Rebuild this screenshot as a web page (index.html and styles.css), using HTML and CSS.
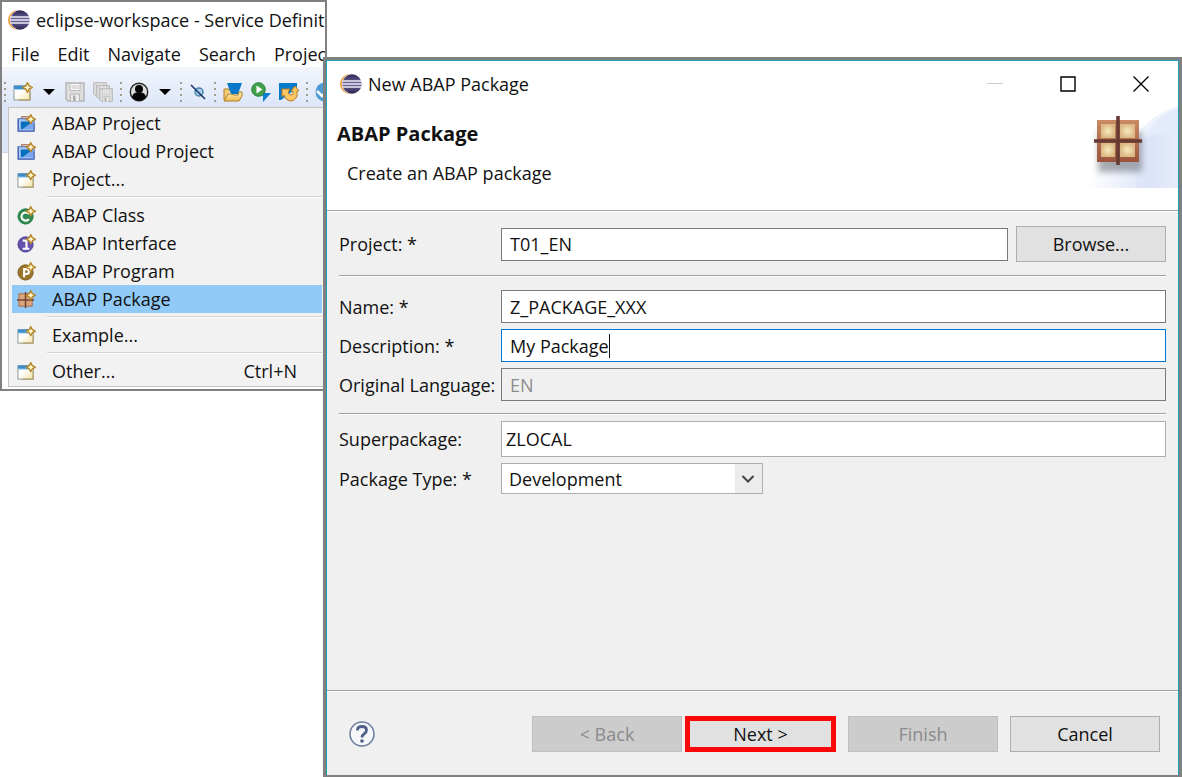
FILE: index.html
```
<!DOCTYPE html>
<html lang="en">
<head>
<meta charset="utf-8">
<title>New ABAP Package</title>
<link rel="stylesheet" href="styles.css">
</head>
<body>
<svg class="defs" aria-hidden="true">
  <defs>
    <linearGradient id="gEclipse" x1="0" y1="0" x2="0" y2="1"><stop offset="0" stop-color="#2f2858"/><stop offset=".5" stop-color="#6f6a9c"/><stop offset="1" stop-color="#2b2352"/></linearGradient>
    <linearGradient id="gPaper" x1="0" y1="0" x2="1" y2="1"><stop offset=".4" stop-color="#fff"/><stop offset="1" stop-color="#f3e3a4"/></linearGradient>
    <linearGradient id="gFolder" x1="0" y1="0" x2="0" y2="1"><stop offset="0" stop-color="#fff0be"/><stop offset="1" stop-color="#f0b94e"/></linearGradient>
    <linearGradient id="gFrame" x1="0" y1="0" x2="0" y2="1"><stop offset="0" stop-color="#c98a64"/><stop offset="1" stop-color="#9a543c"/></linearGradient>
    <radialGradient id="gCell"><stop offset="0" stop-color="#f8ecc0"/><stop offset="1" stop-color="#dcb884"/></radialGradient>
    <linearGradient id="gWave" x1="0" y1="0" x2="1" y2="0"><stop offset="0" stop-color="#dfe6f8" stop-opacity="0"/><stop offset=".7" stop-color="#dce4f8"/><stop offset="1" stop-color="#e6ecfa"/></linearGradient>
    <filter id="soft" x="-20%" y="-20%" width="140%" height="140%"><feGaussianBlur stdDeviation="3"/></filter>
    <symbol id="eclipse" viewBox="0 0 22 22">
      <circle cx="10" cy="11" r="10" fill="#f09a3c"/><circle cx="11.6" cy="11" r="9.9" fill="#fff"/>
      <circle cx="12" cy="11" r="9.7" fill="url(#gEclipse)"/>
      <path d="M2.8 8h18.4M2.4 11h19.2M2.8 14h18.4" stroke="#eceaf6" stroke-width="1.5"/>
    </symbol>
    <symbol id="spark" viewBox="0 0 10 10"><path d="M5 .6 6.5 3.5 9.4 5 6.5 6.5 5 9.4 3.5 6.5.6 5 3.5 3.5Z" fill="#fff6cf" stroke="#b8892a" stroke-width="1.3"/></symbol>
    <symbol id="wizard" viewBox="0 0 20 20">
      <rect x="1" y="4" width="16" height="14" fill="url(#gPaper)" stroke="#8c9694"/>
      <rect x="1" y="3.500" width="15" height="4" fill="#3d8ecb"/><path d="M1 7.500h15" stroke="#a6d2ef"/>
      <path d="M17 9v9H6" fill="none" stroke="#b39a58"/>
      <use href="#spark" x="9" y="0" width="11" height="11"/>
    </symbol>
    <symbol id="project" viewBox="0 0 20 20">
      <path d="M5 5V3h8v2" fill="none" stroke="#b8866c" stroke-width="1.6"/>
      <rect x="1" y="5" width="17" height="13" fill="#a9c8f6" stroke="#4668ac"/>
      <path d="M4 8h13L6 16H4Z" fill="#086fbd"/><path d="M17 8v8H6Z" fill="#78a5f0"/>
      <path d="M1.500 6v12M18 10v8H1" fill="none" stroke="#4562b6"/>
      <use href="#spark" x="9" y="0" width="11" height="11"/>
    </symbol>
    <symbol id="class" viewBox="0 0 20 20">
      <circle cx="9" cy="11" r="8" fill="#318b4e" stroke="#1d7542"/><path d="M12.500 8.500A4.300 4.300 0 1 0 12.500 13.700" fill="none" stroke="#fff" stroke-width="2.200"/>
      <use href="#spark" x="9" y="0" width="11" height="11"/>
    </symbol>
    <symbol id="interface" viewBox="0 0 20 20">
      <circle cx="9" cy="11" r="8" fill="#6652ac" stroke="#4f3b96"/><path d="M6 7h4v8M6 15.500h7" fill="none" stroke="#fff" stroke-width="2.200"/>
      <use href="#spark" x="9" y="0" width="11" height="11"/>
    </symbol>
    <symbol id="program" viewBox="0 0 20 20">
      <circle cx="9" cy="11" r="8" fill="#9a762a" stroke="#7c5a16"/><path d="M7.500 16V7.500H10a2.600 2.600 0 0 1 0 5.200H7.500" fill="none" stroke="#fff" stroke-width="2.200"/>
      <use href="#spark" x="9" y="0" width="11" height="11"/>
    </symbol>
    <symbol id="package" viewBox="0 0 20 20">
      <rect x="2" y="4" width="14" height="13" fill="#dba67e" stroke="#a86a4c"/>
      <path d="M9 2v17M0 10.500h18" stroke="#74412f" stroke-width="1.600"/>
      <use href="#spark" x="9" y="0" width="11" height="11"/>
    </symbol>
    <symbol id="floppy" viewBox="0 0 20 20">
      <path d="M1 1h18v18H3l-2-2Z" fill="#dedede" stroke="#b4b4b4" stroke-width="1.400"/>
      <path d="M5 1.500h10v7H5Z" fill="#f6f6f6" stroke="#bdbdbd"/><path d="M6.500 4h7M6.500 6h7" stroke="#c6c6c6"/><path d="M5.500 19v-7h9v7" fill="#eee" stroke="#b4b4b4"/><path d="M8 13.500h2.500V19H8Z" fill="#aaa"/>
    </symbol>
  </defs>
</svg>

<main class="desktop">
  <section class="workbench" aria-label="Eclipse workbench">
    <header class="caption">
      <svg class="app-icon"><use href="#eclipse"/></svg>
      <span>eclipse-workspace - Service Definit</span>
    </header>
    <nav class="menubar" aria-label="Main menu">
      <button type="button">File</button><button type="button">Edit</button><button type="button">Navigate</button><button type="button">Search</button><button type="button">Project</button>
    </nav>
    <div class="toolbar" role="toolbar" aria-label="Main toolbar">
      <i class="grip"></i>
      <button type="button" class="tool" aria-label="New"><svg><use href="#wizard"/></svg></button>
      <button type="button" class="arrow" aria-label="New options"></button>
      <button type="button" class="tool" aria-label="Save"><svg><use href="#floppy"/></svg></button>
      <button type="button" class="tool" aria-label="Save all"><svg viewBox="0 0 20 20"><use href="#floppy" x="0" y="0" width="14" height="14"/><use href="#floppy" x="3" y="3" width="14" height="14"/><use href="#floppy" x="6" y="6" width="14" height="14"/></svg></button>
      <i class="grip"></i>
      <button type="button" class="tool" aria-label="User"><svg viewBox="0 0 20 20"><circle cx="10" cy="10" r="8.700" fill="#ddd" stroke="#222" stroke-width="1.400"/><circle cx="10" cy="7" r="4" fill="#050505"/><path d="M3 15q1-4.500 5-4.500h4q4 0 5 4.500-3 3.800-7 3.800T3 15Z" fill="#050505"/></svg></button>
      <button type="button" class="arrow" aria-label="User options"></button>
      <i class="grip"></i>
      <button type="button" class="tool narrow" aria-label="Skip breakpoints"><svg viewBox="1 0 18 20"><circle cx="11" cy="10" r="4" fill="#a9cfe4" stroke="#4584ad" stroke-width="1.500"/><path d="M3 3l14 14" stroke="#1d3567" stroke-width="1.600"/></svg></button>
      <i class="grip"></i>
      <button type="button" class="tool" aria-label="Open object"><svg viewBox="0 0 20 20"><path d="M1 18V7h5l1 2" fill="#f3cc72" stroke="#b17a25"/><path d="M4 1h15l-4 11H8Z" fill="#0879c8"/><path d="M1 19 5 12h4l1 1h5l1-3h3v4l-3 5Z" fill="url(#gFolder)" stroke="#b17a25"/></svg></button>
      <button type="button" class="tool" aria-label="Run object"><svg viewBox="0 0 20 20"><path d="M9 11h11L12 20v-6Z" fill="#087fd0"/><circle cx="7.500" cy="7.500" r="6.800" fill="#43a04b" stroke="#248139"/><path d="M5.500 3.500 11.500 7.500 5.500 11.500Z" fill="#fff"/></svg></button>
      <button type="button" class="tool" aria-label="Refresh object"><svg viewBox="0 0 20 20"><path d="M0 1h18v5L2 18H0Z" fill="#087acb"/><path d="M3 7h8L9 10q1 4 4 3 1-1 1-4h-2l4-5 4 5h-2v5q-2 5-7 5-5-1-6-6l-2 2Z" fill="#fbc765" stroke="#b97a21"/></svg></button>
      <i class="grip"></i>
      <button type="button" class="tool" aria-label="Check"><svg viewBox="0 0 20 20"><circle cx="10" cy="10" r="9.500" fill="#4a9bd3"/><path d="m2 9 5 5 8-8" fill="none" stroke="#fff" stroke-width="2.500"/></svg></button>
    </div>
    <div class="editor">
      <menu class="new-menu">
        <li><button type="button"><svg><use href="#project"/></svg><span>ABAP Project</span></button></li>
        <li><button type="button"><svg><use href="#project"/></svg><span>ABAP Cloud Project</span></button></li>
        <li><button type="button"><svg><use href="#wizard"/></svg><span>Project...</span></button></li>
        <li class="divider"></li>
        <li><button type="button"><svg><use href="#class"/></svg><span>ABAP Class</span></button></li>
        <li><button type="button"><svg><use href="#interface"/></svg><span>ABAP Interface</span></button></li>
        <li><button type="button"><svg><use href="#program"/></svg><span>ABAP Program</span></button></li>
        <li><button type="button" class="selected"><svg><use href="#package"/></svg><span>ABAP Package</span></button></li>
        <li class="divider"></li>
        <li><button type="button"><svg><use href="#wizard"/></svg><span>Example...</span></button></li>
        <li class="divider"></li>
        <li><button type="button"><svg><use href="#wizard"/></svg><span>Other...</span><kbd>Ctrl+N</kbd></button></li>
      </menu>
    </div>
  </section>

  <section class="dialog" role="dialog" aria-labelledby="dialog-title">
    <header class="banner">
      <div class="titlebar">
        <svg class="app-icon"><use href="#eclipse"/></svg>
        <span id="dialog-title">New ABAP Package</span>
        <div class="window-buttons">
          <button type="button" disabled aria-label="Minimize"><svg viewBox="0 0 16 16"><path d="M0 7.500h16" stroke="#ccc"/></svg></button>
          <button type="button" aria-label="Maximize"><svg viewBox="0 0 16 16"><path d="M1 1h14v14H1Z" fill="none" stroke="#000" stroke-width="1.400"/></svg></button>
          <button type="button" aria-label="Close"><svg viewBox="0 0 16 16"><path d="m.5.5 15 15m0-15-15 15" stroke="#000" stroke-width="1.300"/></svg></button>
        </div>
      </div>
      <div class="intro">
        <div class="intro-text">
          <h1>ABAP Package</h1>
          <p>Create an ABAP package</p>
        </div>
        <svg class="banner-art" viewBox="0 0 92 84" aria-hidden="true">
          <path d="M50 30Q66 8 92 0v82H50Z" fill="#eef3fd"/>
          <path d="M52 44Q64 12 92 2v80H50Z" fill="#e4ebfa"/>
          <path d="M0 82Q10 60 50 36Q70 26 92 26v56Z" fill="url(#gWave)"/>
          <rect x="12" y="26" width="44" height="40" fill="#70747c" opacity=".6" filter="url(#soft)"/>
          <rect x="11" y="14" width="42" height="42" fill="url(#gFrame)"/>
          <g fill="url(#gCell)"><rect x="15" y="18" width="14" height="14"/><rect x="34" y="18" width="15" height="14"/><rect x="15" y="37" width="14" height="14"/><rect x="34" y="37" width="15" height="14"/></g>
          <path d="M32 10v49M8 35h48" stroke="#683b32" stroke-width="3.600"/>
        </svg>
      </div>
    </header>

    <form class="form">
      <div class="row">
        <label for="project-name">Project: *</label>
        <input id="project-name" type="text" value="T01_EN">
        <button type="button" class="btn">Browse...</button>
      </div>
      <hr>
      <div class="group">
        <div class="row"><label for="name">Name: *</label><input id="name" type="text" value="Z_PACKAGE_XXX"></div>
        <div class="row"><label for="description">Description: *</label>
          <div class="field"><input id="description" type="text" value="My Package"><i class="caret"></i></div></div>
        <div class="row"><label for="language">Original Language:</label><input id="language" type="text" value="EN" disabled></div>
      </div>
      <hr class="tight">
      <div class="group">
        <div class="row"><label for="super">Superpackage:</label><input id="super" class="tall" type="text" value="ZLOCAL"></div>
        <div class="row"><label for="type">Package Type: *</label>
          <div class="combo"><select id="type"><option>Development</option></select><svg viewBox="0 0 14 10" aria-hidden="true"><path d="m1.500 2 5.500 5.500L12.500 2" fill="none" stroke="#444" stroke-width="2"/></svg></div></div>
      </div>
    </form>

    <footer class="actions">
      <button type="button" class="help" aria-label="Help"><svg viewBox="0 0 26 26"><circle cx="13" cy="13" r="12" fill="#f6f7fa" stroke="#697c9f" stroke-width="1.500"/><path d="M8.500 9.500q0-4 4.500-4t4.500 3.700q0 2.200-2.500 3.800-2 1.300-2 3.500" fill="none" stroke="#4c6088" stroke-width="2.800"/><circle cx="13" cy="20" r="1.800" fill="#4c6088"/></svg></button>
      <div class="nav-pair">
        <button type="button" class="btn" disabled>&lt; Back</button>
        <button type="button" class="btn next">Next &gt;</button>
      </div>
      <button type="button" class="btn" disabled>Finish</button>
      <button type="button" class="btn">Cancel</button>
    </footer>
  </section>
</main>
</body>
</html>
```
FILE: styles.css
```
* { box-sizing: border-box; }

body {
  margin: 0;
  background: #fff;
  color: #111;
  font: 18px/24px "Open Sans", "Noto Sans", sans-serif;
}

button, input, select, kbd { font: inherit; color: inherit; }
button { margin: 0; padding: 0; border: 0; background: none; white-space: nowrap; }
svg { display: block; flex: none; }
.defs { position: absolute; width: 0; height: 0; }
.app-icon { width: 22px; height: 22px; }

.desktop { position: relative; min-height: 100vh; }

/* Workbench window */
.workbench {
  position: absolute;
  top: 0;
  left: 0;
  width: 327px;
  overflow: hidden;
  border: 2px solid #808080;
}
.caption { display: flex; align-items: center; gap: 6px; height: 36px; padding-left: 6px; white-space: nowrap; }
.menubar { display: flex; gap: 18px; height: 29px; padding: 2px 0 0 9px; align-items: center; }
.toolbar {
  display: flex;
  align-items: center;
  height: 40px;
  padding-top: 10px;
  background: linear-gradient(#f3f5fb, #dce6f8);
}
.tool { flex: none; width: 20px; margin: 0 4px; }
.tool svg { width: 100%; height: 20px; }
.tool.narrow { width: 18px; }
.arrow {
  flex: none;
  width: 12px;
  height: 6px;
  margin: 0 6px;
  background: #000;
  clip-path: polygon(0 0, 100% 0, 50% 100%);
}
.grip { flex: none; width: 2px; height: 20px; margin: 0 3px; background: repeating-linear-gradient(#a39c92 0 2px, transparent 2px 6px); }
.toolbar .grip:first-child { margin-left: 2px; }
.editor { padding: 0 0 2px 6px; background: linear-gradient(#dce6f5 45px, #9db1d0 45px, #fff 46px); }

.new-menu {
  list-style: none;
  margin: 0;
  padding: 1px 3px;
  border: 1px solid #c4c4c4;
  border-right: 0;
  background: #f2f2f2;
}
.new-menu button { display: flex; align-items: center; width: 100%; height: 28px; padding-left: 5px; gap: 16px; text-align: left; }
.new-menu svg { width: 19px; height: 19px; }
.new-menu .selected { background: #91c9f7; }
.new-menu kbd { margin: 0 25px 0 auto; }
.divider { height: 8px; margin-left: 35px; background: linear-gradient(transparent 3px, #d2d2d2 3px 4px, #fff 4px 5px, transparent 5px); }

/* Wizard dialog */
.dialog {
  position: absolute;
  inset: 57px 0 0 323px;
  display: flex;
  flex-direction: column;
  border: 3px solid #808080;
  border-bottom-width: 2px;
  background: #f0f0f0;
  box-shadow: inset 0 0 0 1px #1a9fb8;
}
.banner { margin: 1px 1px 0; border-bottom: 1px solid #a0a0a0; background: #fff; box-shadow: 0 1px #fff; }
.titlebar { display: flex; align-items: center; gap: 6px; height: 45px; padding: 0 29px 0 13px; }
.window-buttons { display: flex; gap: 57px; margin-left: auto; }
.window-buttons svg { width: 16px; height: 16px; }
.intro { display: flex; justify-content: space-between; }
.intro-text { padding: 16px 0 25px 10px; }
.intro h1 { margin: 0; font-size: 20px; line-height: 24px; }
.intro p { margin: 15px 0 0 10px; }
.banner-art { width: 92px; height: 84px; }

.form { flex: 1; padding: 15px 13px 0; }
.row { display: grid; grid-template-columns: 162px 1fr auto; align-items: center; }
.row .btn { margin-left: 8px; }
.row label { white-space: nowrap; }
.group { display: grid; gap: 6px; }
.form hr { height: 2px; margin: 13px 0; border: 0; background: linear-gradient(#a0a0a0 1px, #fff 1px); }
.form hr.tight { margin: 12px 0 6px; }
.form input {
  width: 100%;
  min-width: 0;
  height: 33px;
  padding: 0 8px;
  border: 1px solid #7a7a7a;
  border-radius: 0;
  background: #fff;
}
.form input:disabled { background: #f0f0f0; color: #8c8c8c; }
.form input.tall { height: 36px; padding: 0 4px; border-color: #abadb3; }
.field { display: flex; align-items: center; height: 33px; border: 1px solid #0078d7; background: #fff; padding: 0 8px; }
.form .field input { width: auto; height: 31px; padding: 0; border: 0; outline: 0; field-sizing: content; }
.caret { width: 1px; height: 24px; background: #111; }
.combo { display: grid; width: 262px; height: 31px; align-items: center; }
.combo select { grid-area: 1 / 1; width: 100%; height: 100%; padding: 0 7px; border: 1px solid #abadb3; border-radius: 0; background: linear-gradient(90deg, #fff calc(100% - 27px), #ececec calc(100% - 27px)); appearance: none; }
.combo svg { grid-area: 1 / 1; justify-self: end; width: 14px; height: 10px; margin-right: 8px; pointer-events: none; }

.btn { width: 150px; height: 36px; border: 1px solid #adadad; background: #e1e1e1; }
.btn:disabled { border-color: #bfbfbf; background: #ccc; color: #8a8a8a; }
.btn.next { width: 151px; border: 5px solid #f80808; }

.actions {
  display: flex;
  align-items: center;
  gap: 12px;
  height: 85px;
  margin: 0 1px;
  padding: 1px 18px 0 22px;
  border-top: 1px solid #a0a0a0;
  background: #f0f0f0;
  box-shadow: inset 0 1px #fff;
}
.help { margin-right: auto; }
.help svg { width: 26px; height: 26px; }
.nav-pair { display: flex; gap: 3px; }
```
